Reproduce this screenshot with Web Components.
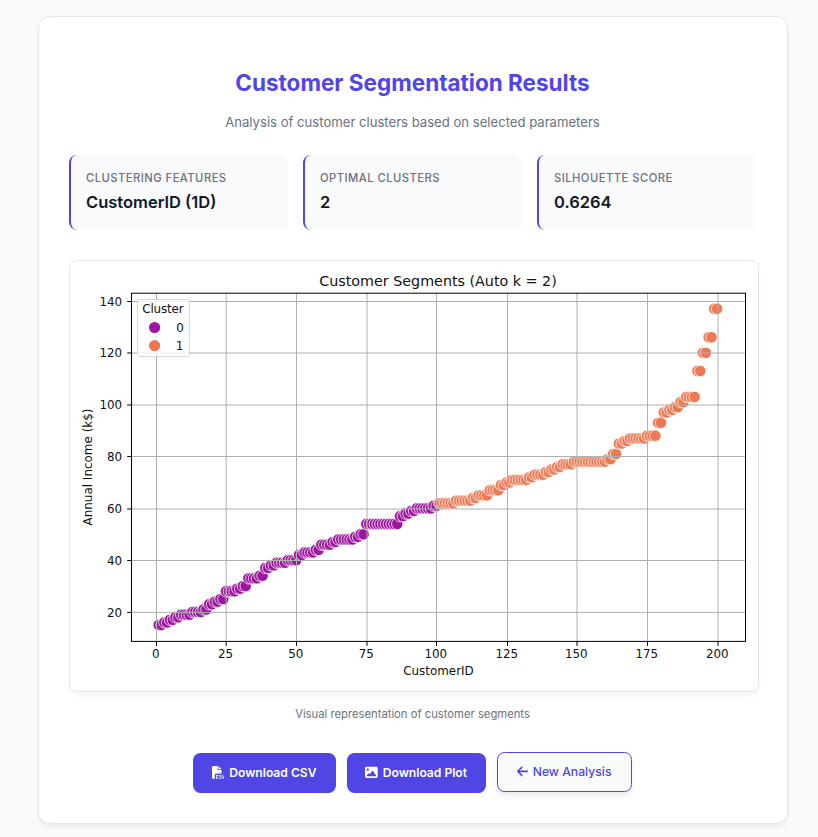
<!DOCTYPE html>
<html lang="en">
<head>
<meta charset="utf-8">
<title>Customer Segmentation Results</title>
<style>
body{margin:0;background:#f9fafb;font-family:Inter,"Liberation Sans",sans-serif;color:#111827;min-height:837px;overflow:hidden}
</style>
</head>
<body>
<results-card>
  <page-heading>
    <span slot="title">Customer Segmentation Results</span>
    <span slot="subtitle">Analysis of customer clusters based on selected parameters</span>
  </page-heading>
  <stat-row>
    <stat-tile><span slot="label">Clustering Features</span>CustomerID (1D)</stat-tile>
    <stat-tile><span slot="label">Optimal Clusters</span>2</stat-tile>
    <stat-tile><span slot="label">Silhouette Score</span>0.6264</stat-tile>
  </stat-row>
  <segment-chart></segment-chart>
  <chart-caption>Visual representation of customer segments</chart-caption>
  <action-row>
    <action-button icon="csv" style="--w:143px">Download CSV</action-button>
    <action-button icon="image" style="--w:139px">Download Plot</action-button>
    <action-button icon="back" outline style="--w:135px">New Analysis</action-button>
  </action-row>
</results-card>
<script>
const define = (name, markup, setup) => customElements.define(name, class extends HTMLElement {
  constructor() {
    super();
    this.attachShadow({ mode: 'open' }).innerHTML = markup;
  }
  connectedCallback() { if (setup) setup(this, this.shadowRoot); }
});

define('results-card', `<style>
:host{display:flex;flex-direction:column;box-sizing:border-box;width:750px;height:808px;margin:16px 0 0 38px;padding:49px 31px 30px 30px;background:#fff;border:1px solid #e5e7eb;border-radius:12px;box-shadow:0 4px 6px -1px rgba(0,0,0,.05),0 2px 4px -1px rgba(0,0,0,.03)}
</style><slot></slot>`);

define('page-heading', `<style>
:host{display:block;text-align:center}
h1{margin:0;font-size:22.5px;line-height:34px;font-weight:700;color:#4f46e5}
p{margin:11px 0 0;font-size:13.125px;line-height:22px;color:#6b7280}
</style><h1><slot name="title"></slot></h1><p><slot name="subtitle"></slot></p>`);

define('stat-row', `<style>
:host{display:grid;grid-template-columns:repeat(3,1fr);gap:15px;margin-top:22px}
</style><slot></slot>`);

define('stat-tile', `<style>
:host{display:block;box-sizing:border-box;height:75px;padding:14px 15px 0 15px;background:#f9fafb;border-left:2px solid #4f46e5;border-radius:8px}
.label{font-size:11.25px;line-height:18px;font-weight:500;letter-spacing:.45px;text-transform:uppercase;color:#6b7280}
.value{font-size:16.5px;line-height:26px;margin-top:2px;font-weight:600;color:#111827}
</style><div class="label"><slot name="label"></slot></div><div class="value"><slot></slot></div>`);

define('segment-chart', `<style>
:host{display:block;box-sizing:border-box;width:690px;height:432px;margin-top:30px;border:1px solid #e5e7eb;border-radius:8px;overflow:hidden;box-shadow:0 4px 6px -1px rgba(0,0,0,.05)}
svg{display:block}
text{font-family:"DejaVu Sans",sans-serif;fill:#111}
</style><svg width="688" height="430" viewBox="70 261 688 430"></svg>`, (host, root) => {
  // Income values as [value, number of consecutive customers].
  const runs = [[15,2],[16,2],[17,2],[18,2],[19,4],[20,4],[21,2],[23,2],[24,2],[25,2],[28,4],[29,2],[30,2],[33,4],[34,2],[37,2],[38,2],[39,4],[40,4],[42,2],[43,4],[44,2],[46,4],[47,2],[48,6],[49,2],[50,2],[54,12],[57,2],[58,2],[59,2],[60,6],[61,2],[62,6],[63,6],[64,2],[65,4],[67,4],[69,2],[70,2],[71,6],[72,2],[73,4],[74,2],[75,2],[76,2],[77,4],[78,12],[79,2],[81,2],[85,2],[86,2],[87,6],[88,4],[93,2],[97,2],[98,2],[99,2],[101,2],[103,4],[113,2],[120,2],[126,2],[137,2]];
  const incomes = runs.flatMap(([v, n]) => Array(n).fill(v));
  const px = id => 155.9 + id * 2.806, py = v => 663.9 - v * 2.592;
  const purple = '#9c179e', orange = '#ed7953';
  let s = '';
  incomes.forEach((v, i) => {
    s += `<circle cx="${px(i + 1).toFixed(2)}" cy="${py(v).toFixed(2)}" r="5.7" fill="${i < 100 ? purple : orange}" stroke="#fff" stroke-width=".75"/>`;
  });
  const label = (x, y, t, w, size = 11.9, extra = '') =>
    `<text x="${x}" y="${y}" font-size="${size}" textLength="${w}" ${extra}>${t}</text>`;
  const xs = [156.5, 226.2, 296.5, 367, 436.5, 507.5, 577, 647.5, 718];
  xs.forEach((x, i) => {
    const t = String(i * 25), w = t.length * 7.6;
    s += `<path d="M${x} 293V641.5" stroke="#b0b0b0" stroke-width="1"/><path d="M${x} 641.5v4.3" stroke="#000"/>`;
    s += label(x - w / 2 - .7, 658.2, t, w);
  });
  [[20, 612.4], [40, 560.5], [60, 509], [80, 456.5], [100, 405], [120, 353], [140, 301.5]].forEach(([v, y]) => {
    const t = String(v), w = t.length * 7.6;
    s += `<path d="M131.5 ${y}H745.5" stroke="#b0b0b0"/><path d="M131.5 ${y}h-4.3" stroke="#000"/>`;
    s += label(122.2 - w, y + 4.4, t, w);
  });
  s += '<rect x="131.5" y="293.2" width="614" height="348.2" fill="none" stroke="#000"/>';
  s += label(319.3, 286, 'Customer Segments (Auto k = 2)', 237.5, 14.3);
  s += label(403.2, 675.2, 'CustomerID', 70.5);
  s += label(0, 0, 'Annual Income (k$)', 117, 11.9, 'transform="translate(91.6 525.5) rotate(-90)"');
  s += '<rect x="137.5" y="299.4" width="51.8" height="57.2" rx="2" fill="#fff" fill-opacity=".8" stroke="#ccc" stroke-opacity=".8"/>';
  s += label(142.2, 313.4, 'Cluster', 41.5);
  s += `<circle cx="154.6" cy="327.5" r="5.6" fill="${purple}"/><circle cx="154.6" cy="345.6" r="5.6" fill="${orange}"/>`;
  s += label(176.3, 331.7, '0', 7.6) + label(175.8, 349.8, '1', 7.6);
  root.querySelector('svg').innerHTML = s;
});

define('chart-caption', `<style>
:host{display:block;margin-top:13px;text-align:center;font-size:11.25px;line-height:18px;color:#6b7280}
</style><slot></slot>`);

define('action-row', `<style>
:host{display:flex;justify-content:center;gap:11px;margin:30px 1px 0 0}
</style><slot></slot>`);

const icons = {
  csv: [512, 'M0 64C0 28.7 28.7 0 64 0H224V128c0 17.7 14.3 32 32 32H384V304H176c-35.3 0-64 28.7-64 64V512H64c-35.3 0-64-28.7-64-64V64zm384 64H256V0L384 128zM200 352h16c22.1 0 40 17.9 40 40v8c0 8.8-7.2 16-16 16s-16-7.2-16-16v-8c0-4.4-3.6-8-8-8H200c-4.4 0-8 3.6-8 8v80c0 4.4 3.6 8 8 8h16c4.4 0 8-3.6 8-8v-8c0-8.8 7.2-16 16-16s16 7.2 16 16v8c0 22.1-17.9 40-40 40H200c-22.1 0-40-17.9-40-40V392c0-22.1 17.9-40 40-40zm133.1 0H368c8.8 0 16 7.2 16 16s-7.2 16-16 16H333.1c-7.2 0-13.1 5.9-13.1 13.1c0 5.2 3 9.9 7.8 12l37.4 16.6c16.3 7.2 26.8 23.4 26.8 41.2c0 24.9-20.2 45.1-45.1 45.1H304c-8.8 0-16-7.2-16-16s7.2-16 16-16h42.9c7.2 0 13.1-5.9 13.1-13.1c0-5.2-3-9.9-7.8-12l-37.4-16.6c-16.3-7.2-26.8-23.4-26.8-41.2c0-24.9 20.2-45.1 45.1-45.1zm98.9 0c8.8 0 16 7.2 16 16v31.6c0 23 5.5 45.6 16 66c10.5-20.3 16-42.9 16-66V368c0-8.8 7.2-16 16-16s16 7.2 16 16v31.6c0 34.7-10.3 68.7-29.6 97.6l-5.1 7.7c-3 4.5-8 7.1-13.3 7.1s-10.3-2.7-13.3-7.1l-5.1-7.7c-19.3-28.9-29.6-62.9-29.6-97.6V368c0-8.8 7.2-16 16-16z'],
  image: [512, 'M0 96C0 60.7 28.7 32 64 32H448c35.3 0 64 28.7 64 64V416c0 35.3-28.7 64-64 64H64c-35.3 0-64-28.7-64-64V96zM323.8 202.5c-4.5-6.6-11.9-10.5-19.8-10.5s-15.4 3.9-19.8 10.5l-87 127.6L170.7 297c-4.6-5.7-11.5-9-18.7-9s-14.2 3.3-18.7 9l-64 80c-5.8 7.2-6.9 17.1-2.9 25.4s12.4 13.6 21.6 13.6h96 32H424c8.9 0 17.1-4.9 21.2-12.8s3.6-17.4-1.4-24.7l-120-176zM112 192a48 48 0 1 0 0-96 48 48 0 1 0 0 96z'],
  back: [448, 'M9.4 233.4c-12.5 12.5-12.5 32.8 0 45.3l160 160c12.5 12.5 32.8 12.5 45.3 0s12.5-32.8 0-45.3L109.2 288 416 288c17.7 0 32-14.3 32-32s-14.3-32-32-32l-306.7 0L214.6 118.6c12.5-12.5 12.5-32.8 0-45.3s-32.8-12.5-45.3 0l-160 160z']
};
define('action-button', `<style>
:host{display:block}
button{display:flex;align-items:center;justify-content:center;gap:5px;box-sizing:border-box;width:var(--w);height:40px;padding:0 0 1px;border:0;border-radius:7.5px;background:#4f46e5;color:#fff;font:600 12.1px Inter,"Liberation Sans",sans-serif;white-space:nowrap}
:host([outline]) button{background:#f9fafb;color:#4f46e5;border:1px solid #4f46e5;box-shadow:0 4px 6px -1px rgba(0,0,0,.1);margin-top:-1px;font-weight:500;font-size:12.2px}
svg{display:block;height:12.75px;fill:currentColor}
</style><button><svg><path/></svg><span><slot></slot></span></button>`, (host, root) => {
  const [w, d] = icons[host.getAttribute('icon')];
  const svg = root.querySelector('svg');
  svg.setAttribute('viewBox', `0 0 ${w} 512`);
  svg.style.width = 12.75 * w / 512 + 'px';
  svg.firstElementChild.setAttribute('d', d);
});
</script>
</body>
</html>
